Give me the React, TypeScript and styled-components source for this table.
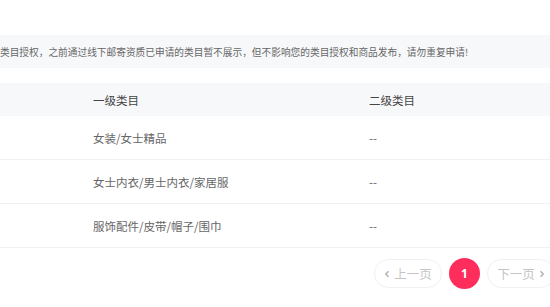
import styled, { createGlobalStyle } from "styled-components";

const GlobalStyle = createGlobalStyle`
  html, body {
    margin: 0;
    padding: 0;
    overflow: hidden;
    background: #fff;
  }
  body {
    font-family: "Noto Sans CJK SC", "Noto Sans", sans-serif;
  }
`;

const Page = styled.div`
  width: 555px;
  padding-top: 35px;
  display: flex;
  flex-direction: column;
`;

const Notice = styled.div`
  height: 33px;
  display: flex;
  align-items: center;
  background: #f7f8fa;
  color: #666;
  font-size: 9.7px;
  white-space: nowrap;
`;

const Table = styled.div`
  margin-top: 15px;
  display: flex;
  flex-direction: column;
`;

const Row = styled.div<{ $head?: boolean }>`
  display: grid;
  grid-template-columns: 276px 1fr;
  padding-left: 93px;
  align-items: center;
  height: ${(p) => (p.$head ? "33px" : "43px")};
  background: ${(p) => (p.$head ? "#f7f8fa" : "#fff")};
  border-bottom: ${(p) => (p.$head ? "none" : "1px solid #f0f1f3")};
  color: ${(p) => (p.$head ? "#444" : "#666")};
  font-size: 11.5px;
`;

const Pager = styled.div`
  margin-top: 10px;
  display: flex;
  justify-content: flex-end;
  align-items: center;
  gap: 7px;
`;

const PageButton = styled.div`
  width: 68px;
  height: 29px;
  box-sizing: border-box;
  border: 1px solid #f0f0f0;
  border-radius: 15px;
  display: flex;
  align-items: center;
  justify-content: center;
  gap: 4px;
  color: #c4c4c4;
  font-size: 12.5px;
`;

const Current = styled.div`
  width: 31px;
  height: 31px;
  border-radius: 50%;
  background: #ff2d5b;
  color: #fff;
  font-size: 12px;
  font-weight: 700;
  font-family: "Noto Sans", sans-serif;
  display: flex;
  align-items: center;
  justify-content: center;
`;

const Chevron = ({ dir }: { dir: "left" | "right" }) => (
  <svg width="6" height="8" viewBox="0 0 6 8">
    <path
      d={dir === "left" ? "M4.5 1.2 L1.8 4 L4.5 6.8" : "M1.5 1.2 L4.2 4 L1.5 6.8"}
      fill="none"
      stroke="#b5b5b5"
      strokeWidth="1.6"
    />
  </svg>
);

const rows = [
  { first: "女装/女士精品", second: "--" },
  { first: "女士内衣/男士内衣/家居服", second: "--" },
  { first: "服饰配件/皮带/帽子/围巾", second: "--" },
];

export default function App() {
  return (
    <>
      <GlobalStyle />
      <Page>
        <Notice>
          类目授权，之前通过线下邮寄资质已申请的类目暂不展示，但不影响您的类目授权和商品发布，请勿重复申请!
        </Notice>
        <Table>
          <Row $head>
            <span>一级类目</span>
            <span>二级类目</span>
          </Row>
          {rows.map((r) => (
            <Row key={r.first}>
              <span>{r.first}</span>
              <span>{r.second}</span>
            </Row>
          ))}
        </Table>
        <Pager>
          <PageButton>
            <Chevron dir="left" />
            上一页
          </PageButton>
          <Current>1</Current>
          <PageButton>
            下一页
            <Chevron dir="right" />
          </PageButton>
        </Pager>
      </Page>
    </>
  );
}
